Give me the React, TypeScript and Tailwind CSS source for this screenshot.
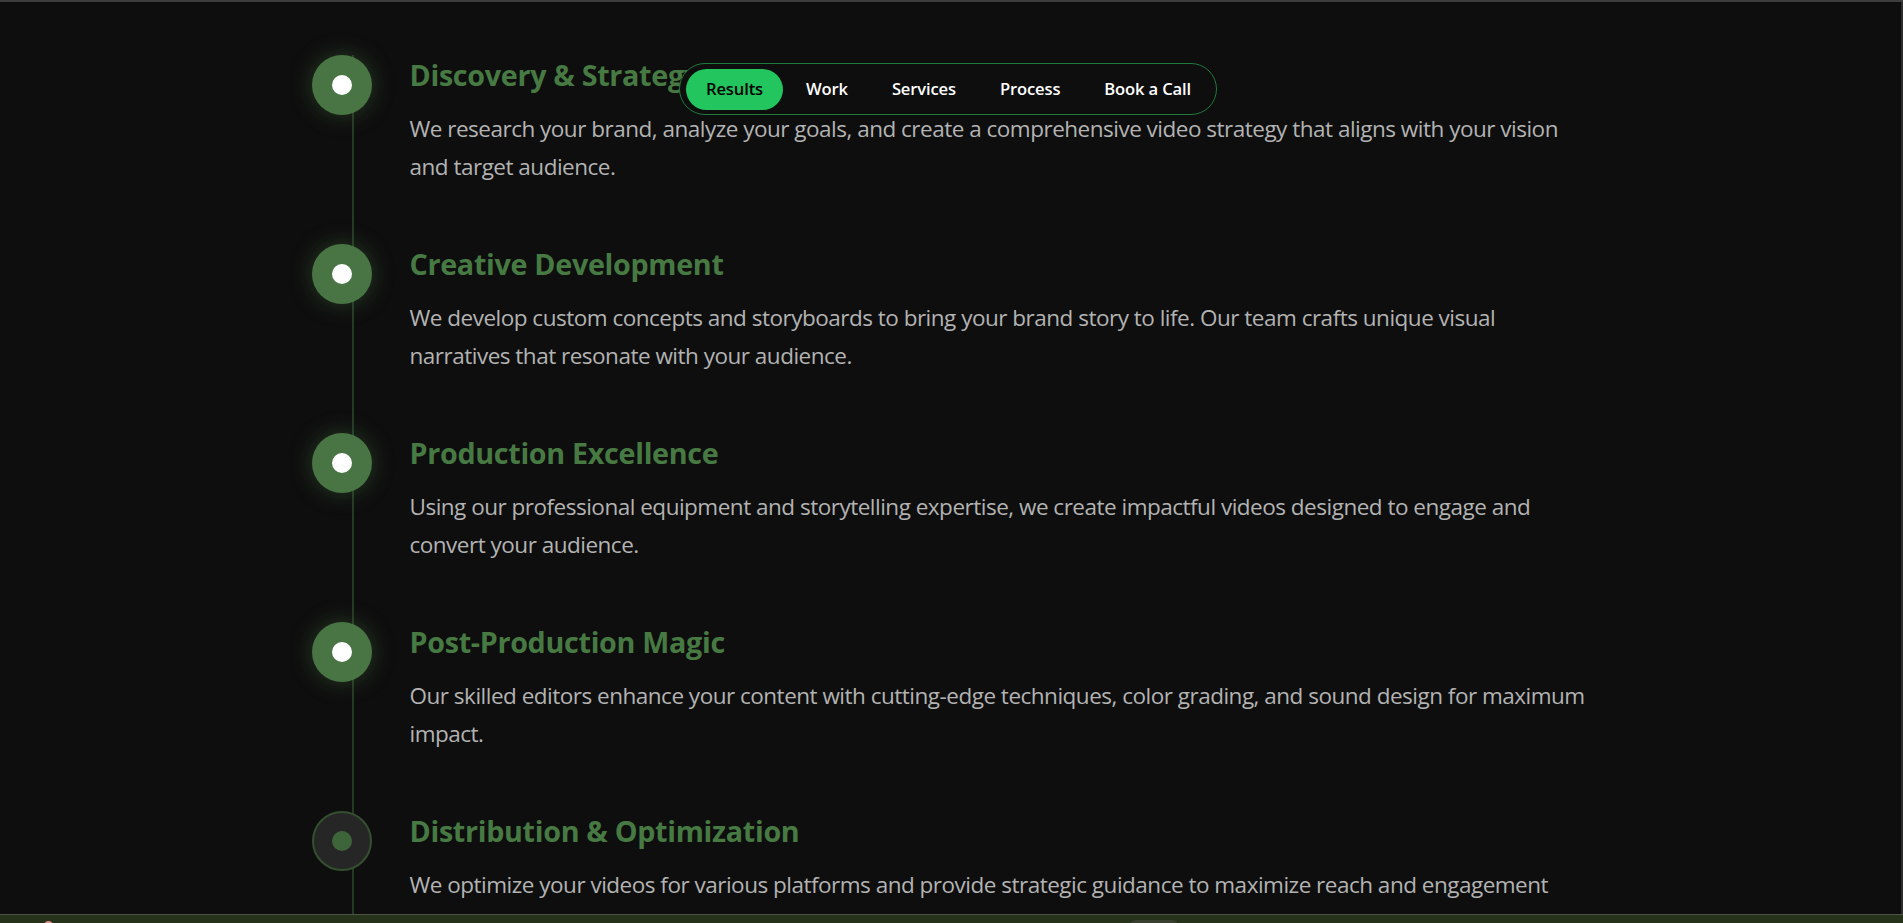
import React from "react";

const steps = [
  {
    title: "Discovery & Strategy",
    text: "We research your brand, analyze your goals, and create a comprehensive video strategy that aligns with your vision and target audience.",
    active: true,
  },
  {
    title: "Creative Development",
    text: "We develop custom concepts and storyboards to bring your brand story to life. Our team crafts unique visual narratives that resonate with your audience.",
    active: true,
  },
  {
    title: "Production Excellence",
    text: "Using our professional equipment and storytelling expertise, we create impactful videos designed to engage and convert your audience.",
    active: true,
  },
  {
    title: "Post-Production Magic",
    text: "Our skilled editors enhance your content with cutting-edge techniques, color grading, and sound design for maximum impact.",
    active: true,
  },
  {
    title: "Distribution & Optimization",
    text: "We optimize your videos for various platforms and provide strategic guidance to maximize reach and engagement across all channels.",
    active: false,
  },
];

export default function App() {
  return (
    <div
      className="relative w-[1903px] h-[923px] overflow-hidden bg-[#0e0e0e]"
      style={{ fontFamily: '"Open Sans", "Noto Sans", sans-serif' }}
    >
      <div className="h-[2px] bg-[#3d3d3d]" />
      <div className="absolute right-0 top-[2px] bottom-0 w-[2px] bg-[#2c2c2c]" />

      <div className="relative max-w-[1280px] mx-auto pt-[53px]">
        <div className="absolute left-[40px] top-[53px] h-[900px] w-[2px] bg-[#243a24]" />
        <div className="flex flex-col gap-[59px]">
          {steps.map((s) => (
            <div key={s.title} className="relative flex items-start">
              {s.active ? (
                <div className="shrink-0 w-[60px] h-[60px] rounded-full bg-[#487543] flex items-center justify-center shadow-[0_0_22px_rgba(72,117,67,0.45)]">
                  <div className="w-[20px] h-[20px] rounded-full bg-white" />
                </div>
              ) : (
                <div className="shrink-0 w-[60px] h-[60px] rounded-full bg-[#262626] border-2 border-[#34502f] flex items-center justify-center">
                  <div className="w-[20px] h-[20px] rounded-full bg-[#3e643a]" />
                </div>
              )}
              <div className="ml-[38px] flex-1">
                <h3 className="text-[28.7px] leading-[40px] font-bold text-[#477a43] tracking-[-0.3px]">
                  {s.title}
                </h3>
                <p className="mt-[15px] text-[22.5px] leading-[37.5px] text-[#b3b3b3] tracking-[-0.5px]">
                  {s.text}
                </p>
              </div>
            </div>
          ))}
        </div>
      </div>

      <nav className="absolute left-[679px] top-[63px] h-[52px] flex items-center gap-[2px] pl-[6px] pr-[25px] rounded-full border border-[#1f7a3c] bg-[#0e0e0e] text-[16.6px] font-semibold tracking-[-0.15px]">
        <a className="h-[41px] px-[20px] flex items-center rounded-full bg-[#22c55e] text-black">Results</a>
        <a className="h-[41px] px-[21px] flex items-center text-white">Work</a>
        <a className="h-[41px] px-[21px] flex items-center text-white">Services</a>
        <a className="h-[41px] px-[21px] flex items-center text-white">Process</a>
        <a className="h-[41px] pl-[21px] flex items-center text-white">Book a Call</a>
      </nav>

      <div className="absolute left-0 right-0 bottom-0 h-[9px] bg-[#27321b] border-t border-[#4c5444]">
        <div className="absolute left-[44px] top-[6px] w-[9px] h-[6px] rounded-t-full bg-[#e88a8a]" />
        <div className="absolute left-[1130px] top-[5px] w-[48px] h-[6px] rounded-t-md bg-[#3a4030]" />
      </div>
    </div>
  );
}
